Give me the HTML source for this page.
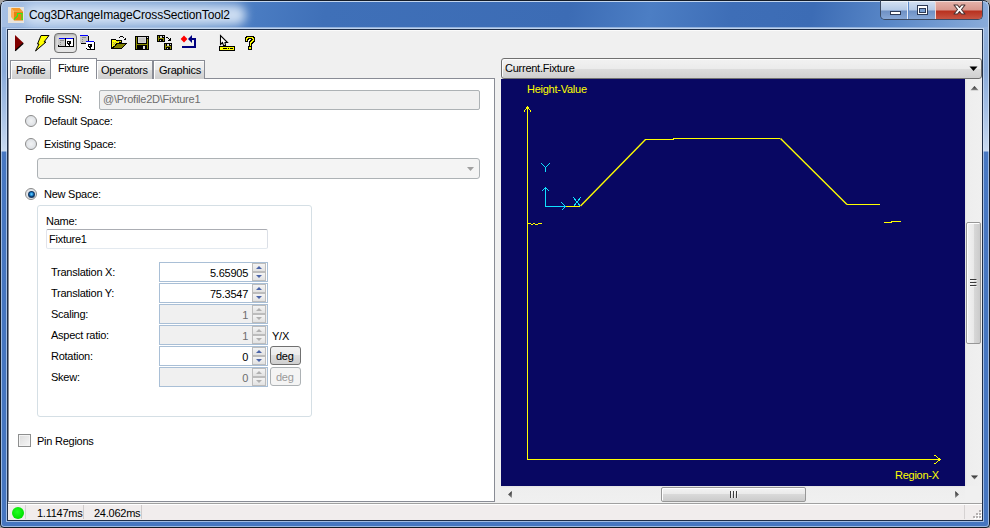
<!DOCTYPE html>
<html><head><meta charset="utf-8">
<style>
html,body{margin:0;padding:0;width:990px;height:528px;overflow:hidden;background:#a4a4a4;}
*{box-sizing:border-box;}
.a{position:absolute;}
.t{position:absolute;font-family:"Liberation Sans",sans-serif;font-size:11px;line-height:13px;white-space:pre;color:#000;letter-spacing:-0.25px;}
#frame{left:0;top:0;width:990px;height:528px;border:1px solid #141c28;border-radius:7px 7px 4px 4px;
 background:linear-gradient(180deg,#9ab6de 0px,#8eaeda 40px,#8aabd9 70px,#a6c0e4 110px,#c4d6ee 145px,#cadaf0 150px,#4878c2 151px,#4676c0 300px,#4676c0 528px);}
#titlebar{left:2px;top:2px;width:986px;height:25px;
 background:linear-gradient(100deg,#a6c0e4 0px,#9cb9e0 40px,#6a94cc 200px,#4a7cc2 250px,#3f70b8 320px,#3c6cb5 560px,#4c7ec4 640px,#3e6eb7 720px,#3c6cb5 800px,#5a88c8 880px,#8fb0dc 986px);}
#hl{left:1px;top:1px;width:988px;height:526px;border:1px solid rgba(230,240,252,0.55);border-radius:6px 6px 3px 3px;}
#halo{left:6px;top:28px;width:978px;height:494px;border:1px solid rgba(220,234,250,0.6);}
#client{left:7px;top:29px;width:976px;height:492px;border:1px solid #1e2e48;background:#f0f0f0;}

.tab{border:1px solid #898c95;border-bottom:none;background:linear-gradient(180deg,#f2f2f2 0,#ebebeb 50%,#dddddd 50%,#cfcfcf 100%);box-shadow:inset 1px 1px 0 #fff;}
.radio{width:12px;height:12px;border-radius:50%;border:1px solid #8a8a8a;background:radial-gradient(circle at 50% 50%,#f2f3f4 0,#dfe2e6 65%,#fafafa 78%,#fdfdfd 100%);}
.radio.on::after{content:"";position:absolute;left:1.5px;top:1.5px;width:7px;height:7px;border-radius:50%;background:radial-gradient(circle closest-side at 50% 45%,#7ad4ff 0,#2a98de 40%,#1268b0 62%,#0c3462 85%,#1c3c62 100%);}
.spin{width:14px;height:18px;}
.su{border:1px solid #bcbcbc;background:linear-gradient(180deg,#f4f4f4,#e2e2e2);}
</style></head><body>
<div id="frame" class="a"></div>
<div id="titlebar" class="a"></div>
<div id="hl" class="a"></div>
<div id="halo" class="a"></div>
<!-- title glow -->
<div class="a" style="left:24px;top:5px;width:222px;height:20px;border-radius:10px;background:rgba(214,228,245,0.92);filter:blur(5px);"></div>
<!-- title icon -->
<svg class="a" style="left:8px;top:7px" width="16" height="16" viewBox="0 0 16 16">
 <rect x="0" y="0" width="16" height="16" fill="#e8e4dc"/>
 <polygon points="3,1 11.6,1 15,4.5 6,4.5" fill="#f39a2a"/>
 <polygon points="3,1 6,4.5 6,13.5 3,10" fill="#ffb05a"/>
 <polygon points="6,4.5 15,4.5 15,13.5 6,13.5" fill="#e8820e"/>
 <polyline points="6,12.5 9.5,9 9.5,6.5 14,6.5 14,12.5 15,12.5" fill="none" stroke="#22f022" stroke-width="1.1"/>
</svg>
<div class="t" style="left:29px;top:8px;font-size:12px;line-height:14px;letter-spacing:-0.17px;color:#000">Cog3DRangeImageCrossSectionTool2</div>

<!-- caption buttons -->
<div class="a" style="left:880px;top:0px;width:103px;height:20px;border:1px solid #3b4a63;border-top-color:#1a2430;border-radius:0 0 5px 5px;overflow:hidden;">
  <div class="a" style="left:0;top:0;width:27px;height:19px;background:linear-gradient(180deg,#d4e1f2 0,#b4c9e6 48%,#6e90c4 52%,#8aaad8 100%);border-right:1px solid #e8eef8;box-shadow:inset 0 1px 0 rgba(255,255,255,0.6);"></div>
  <div class="a" style="left:28px;top:0;width:26px;height:19px;background:linear-gradient(180deg,#d4e1f2 0,#b4c9e6 48%,#6e90c4 52%,#8aaad8 100%);box-shadow:inset 0 1px 0 rgba(255,255,255,0.6);"></div>
  <div class="a" style="left:54px;top:0;width:48px;height:19px;border-left:1px solid #f0d8d4;background:linear-gradient(180deg,#e6b4ac 0,#d8968c 48%,#b8301e 52%,#c85a48 100%);box-shadow:inset 0 1px 0 rgba(255,255,255,0.5),inset -1px -1px 0 rgba(90,20,10,0.5);"></div>
  <div class="a" style="left:9px;top:10px;width:11px;height:4px;background:#fff;border:1px solid #2d3a55;"></div>
  <div class="a" style="left:36px;top:4px;width:11px;height:10px;border:1px solid #2d3a55;background:#fff;"><div class="a" style="left:1px;top:2px;width:7px;height:5px;border:1px solid #2d3a55;background:#7a9ed0"></div></div>
  <svg class="a" style="left:70px;top:0px" width="18" height="18" viewBox="0 0 18 18"><polygon points="3,4 6.5,4 8.5,6.5 10.5,4 14,4 10.5,8.5 14,13 10.5,13 8.5,10.5 6.5,13 3,13 6.5,8.5" fill="#fff" stroke="#4a3434" stroke-width="1.1" stroke-linejoin="round"/></svg>
</div>

<div id="client" class="a"></div>

<!-- toolbar area bg -->
<div class="a" style="left:8px;top:30px;width:974px;height:28px;background:#f0f0f0;border-top:1px solid #fbfbfb;"></div>
<!-- run triangle -->
<svg class="a" style="left:14px;top:34px" width="11" height="18" viewBox="0 0 11 18"><polygon points="1,1 9.5,9 1,17" fill="#800000"/><path d="M9.3,9.2 L1.2,16.8" stroke="#000" stroke-width="1.2"/></svg>
<!-- lightning -->
<svg class="a" style="left:34px;top:34px" width="16" height="18" viewBox="0 0 16 18">
 <polygon points="7,1.5 15,1.5 10,8 12,8 1.5,17 5,10 3.5,10" fill="#ffff00" stroke="#000" stroke-width="1" stroke-linejoin="miter"/>
</svg>
<!-- pressed button -->
<div class="a" style="left:54px;top:33px;width:23px;height:20px;border:1px solid #707070;border-radius:4px;background:linear-gradient(180deg,#d6d6d6,#e6e6e6);box-shadow:inset 1px 1px 2px rgba(0,0,0,0.2);"></div>
<svg class="a" style="left:58px;top:38px" width="16" height="9" viewBox="0 0 16 9" shape-rendering="crispEdges"><path d="M0,0h1v1h-1zM0,1h1v1h-1zM0,2h1v1h-1zM0,3h1v1h-1zM0,4h1v1h-1zM0,5h1v1h-1zM0,6h1v1h-1zM1,1h1v1h-1zM1,2h1v1h-1zM1,3h1v1h-1zM1,4h1v1h-1zM1,5h1v1h-1zM1,6h1v1h-1zM1,7h1v1h-1zM2,1h1v1h-1zM2,3h1v1h-1zM2,5h1v1h-1zM2,7h1v1h-1zM3,1h1v1h-1zM3,3h1v1h-1zM3,4h1v1h-1zM3,5h1v1h-1zM3,6h1v1h-1zM3,7h1v1h-1zM4,1h1v1h-1zM4,3h1v1h-1zM4,4h1v1h-1zM4,5h1v1h-1zM4,6h1v1h-1zM4,7h1v1h-1zM5,1h1v1h-1zM5,3h1v1h-1zM5,4h1v1h-1zM5,5h1v1h-1zM5,6h1v1h-1zM5,7h1v1h-1zM6,1h1v1h-1zM6,2h1v1h-1zM6,3h1v1h-1zM6,4h1v1h-1zM6,5h1v1h-1zM6,6h1v1h-1zM6,7h1v1h-1z" fill="#c8c8c8"/><path d="M1,0h1v1h-1zM2,0h1v1h-1zM3,0h1v1h-1zM4,0h1v1h-1zM5,0h1v1h-1zM6,0h1v1h-1zM8,0h1v1h-1zM9,0h1v1h-1zM10,0h1v1h-1zM11,0h1v1h-1zM12,0h1v1h-1zM13,0h1v1h-1zM14,0h1v1h-1z" fill="#0000ff"/><path d="M0,7h1v1h-1zM0,8h1v1h-1zM1,8h1v1h-1zM2,8h1v1h-1zM3,8h1v1h-1zM4,8h1v1h-1zM5,8h1v1h-1zM6,8h1v1h-1zM7,0h1v1h-1zM7,1h1v1h-1zM7,2h1v1h-1zM7,3h1v1h-1zM7,4h1v1h-1zM7,5h1v1h-1zM7,6h1v1h-1zM7,7h1v1h-1zM7,8h1v1h-1zM8,8h1v1h-1zM9,3h1v1h-1zM9,4h1v1h-1zM9,5h1v1h-1zM9,8h1v1h-1zM10,3h1v1h-1zM10,5h1v1h-1zM10,6h1v1h-1zM10,8h1v1h-1zM11,3h1v1h-1zM11,4h1v1h-1zM11,5h1v1h-1zM11,6h1v1h-1zM11,7h1v1h-1zM11,8h1v1h-1zM12,3h1v1h-1zM12,4h1v1h-1zM12,5h1v1h-1zM12,8h1v1h-1zM13,8h1v1h-1zM14,8h1v1h-1zM15,0h1v1h-1zM15,1h1v1h-1zM15,2h1v1h-1zM15,3h1v1h-1zM15,4h1v1h-1zM15,5h1v1h-1zM15,6h1v1h-1zM15,7h1v1h-1zM15,8h1v1h-1z" fill="#000"/><path d="M8,1h1v1h-1zM8,2h1v1h-1zM8,3h1v1h-1zM8,4h1v1h-1zM8,5h1v1h-1zM8,6h1v1h-1zM8,7h1v1h-1zM9,1h1v1h-1zM9,2h1v1h-1zM9,6h1v1h-1zM9,7h1v1h-1zM10,1h1v1h-1zM10,2h1v1h-1zM10,4h1v1h-1zM10,7h1v1h-1zM11,1h1v1h-1zM11,2h1v1h-1zM12,1h1v1h-1zM12,2h1v1h-1zM12,6h1v1h-1zM12,7h1v1h-1zM13,1h1v1h-1zM13,2h1v1h-1zM13,3h1v1h-1zM13,4h1v1h-1zM13,5h1v1h-1zM13,6h1v1h-1zM13,7h1v1h-1zM14,1h1v1h-1zM14,2h1v1h-1zM14,3h1v1h-1zM14,4h1v1h-1zM14,5h1v1h-1zM14,6h1v1h-1zM14,7h1v1h-1z" fill="#ffffff"/><path d="M2,2h1v1h-1zM2,4h1v1h-1zM2,6h1v1h-1zM3,2h1v1h-1zM4,2h1v1h-1zM5,2h1v1h-1z" fill="#8c8c8c"/></svg>
<!-- icon 4 -->
<svg class="a" style="left:80px;top:35px" width="15" height="15" viewBox="0 0 15 15" shape-rendering="crispEdges"><path d="M0,0h1v1h-1zM1,0h1v1h-1zM2,0h1v1h-1zM3,0h1v1h-1zM4,0h1v1h-1zM5,0h1v1h-1zM6,0h1v1h-1zM6,6h1v1h-1zM7,0h1v1h-1zM7,6h1v1h-1zM8,6h1v1h-1zM9,6h1v1h-1zM10,6h1v1h-1zM11,6h1v1h-1zM12,6h1v1h-1zM13,6h1v1h-1z" fill="#0000ff"/><path d="M0,1h1v1h-1zM0,2h1v1h-1zM0,3h1v1h-1zM0,4h1v1h-1zM0,5h1v1h-1zM0,6h1v1h-1zM0,7h1v1h-1zM1,1h1v1h-1zM1,2h1v1h-1zM1,3h1v1h-1zM1,4h1v1h-1zM1,5h1v1h-1zM1,6h1v1h-1zM1,7h1v1h-1zM2,1h1v1h-1zM2,3h1v1h-1zM2,5h1v1h-1zM2,7h1v1h-1zM3,1h1v1h-1zM3,3h1v1h-1zM3,4h1v1h-1zM3,5h1v1h-1zM3,6h1v1h-1zM3,7h1v1h-1zM4,1h1v1h-1zM4,3h1v1h-1zM4,4h1v1h-1zM4,5h1v1h-1zM4,6h1v1h-1zM4,7h1v1h-1zM5,1h1v1h-1zM5,3h1v1h-1zM5,4h1v1h-1zM5,5h1v1h-1zM5,6h1v1h-1zM5,7h1v1h-1zM6,1h1v1h-1zM6,2h1v1h-1zM6,3h1v1h-1zM6,4h1v1h-1zM6,5h1v1h-1zM7,1h1v1h-1zM7,2h1v1h-1zM7,3h1v1h-1zM7,4h1v1h-1zM7,5h1v1h-1z" fill="#c8c8c8"/><path d="M1,8h1v1h-1zM2,8h1v1h-1zM3,8h1v1h-1zM4,8h1v1h-1zM5,8h1v1h-1zM6,13h1v1h-1zM7,14h1v1h-1zM8,1h1v1h-1zM8,2h1v1h-1zM8,3h1v1h-1zM8,4h1v1h-1zM8,5h1v1h-1zM8,9h1v1h-1zM8,10h1v1h-1zM8,11h1v1h-1zM8,14h1v1h-1zM9,9h1v1h-1zM9,11h1v1h-1zM9,12h1v1h-1zM9,14h1v1h-1zM10,9h1v1h-1zM10,10h1v1h-1zM10,11h1v1h-1zM10,12h1v1h-1zM10,13h1v1h-1zM10,14h1v1h-1zM11,9h1v1h-1zM11,10h1v1h-1zM11,11h1v1h-1zM11,14h1v1h-1zM12,14h1v1h-1zM13,14h1v1h-1zM14,7h1v1h-1zM14,8h1v1h-1zM14,9h1v1h-1zM14,10h1v1h-1zM14,11h1v1h-1zM14,12h1v1h-1zM14,13h1v1h-1zM14,14h1v1h-1z" fill="#000"/><path d="M2,2h1v1h-1zM2,4h1v1h-1zM2,6h1v1h-1zM3,2h1v1h-1zM4,2h1v1h-1zM5,2h1v1h-1z" fill="#8c8c8c"/><path d="M6,7h1v1h-1zM6,8h1v1h-1zM6,9h1v1h-1zM6,10h1v1h-1zM6,11h1v1h-1zM6,12h1v1h-1zM7,7h1v1h-1zM7,8h1v1h-1zM7,9h1v1h-1zM7,10h1v1h-1zM7,11h1v1h-1zM7,12h1v1h-1zM7,13h1v1h-1zM8,7h1v1h-1zM8,8h1v1h-1zM8,12h1v1h-1zM8,13h1v1h-1zM9,7h1v1h-1zM9,8h1v1h-1zM9,10h1v1h-1zM9,13h1v1h-1zM10,7h1v1h-1zM10,8h1v1h-1zM11,7h1v1h-1zM11,8h1v1h-1zM11,12h1v1h-1zM11,13h1v1h-1zM12,7h1v1h-1zM12,8h1v1h-1zM12,9h1v1h-1zM12,10h1v1h-1zM12,11h1v1h-1zM12,12h1v1h-1zM12,13h1v1h-1zM13,7h1v1h-1zM13,8h1v1h-1zM13,9h1v1h-1zM13,10h1v1h-1zM13,11h1v1h-1zM13,12h1v1h-1zM13,13h1v1h-1z" fill="#ffffff"/></svg>
<!-- folder open -->
<svg class="a" style="left:110px;top:34px" width="18" height="16" viewBox="110 34 18 16" shape-rendering="crispEdges">
 <polygon points="111,39 115,39 116,40 122,40 122,43 127,43 122,49 111,49" fill="#000"/>
 <polygon points="112,40 115,40 116,41 121,41 121,42 116,43 112,47" fill="#ffff00"/>
 <path d="M113,42h1v1h-1zM115,42h1v1h-1zM114,43h1v1h-1zM113,44h1v1h-1zM114,45h1v1h-1zM117,41h1v1h-1zM119,41h1v1h-1z" fill="#a0a060"/>
 <polygon points="113,48 117,44 125,44 121,48" fill="#808000"/>
 <path d="M119,37h1v1h-1zM120,36h3v1h-3zM123,37h1v1h-1z" fill="#000"/>
 <polygon points="126,37 126,40 123,40" fill="#000"/>
</svg>
<!-- floppy -->
<svg class="a" style="left:135px;top:36px" width="14" height="14" viewBox="0 0 14 14" shape-rendering="crispEdges"><path d="M0,0h1v1h-1zM0,1h1v1h-1zM0,2h1v1h-1zM0,3h1v1h-1zM0,4h1v1h-1zM0,5h1v1h-1zM0,6h1v1h-1zM0,7h1v1h-1zM0,8h1v1h-1zM0,9h1v1h-1zM0,10h1v1h-1zM0,11h1v1h-1zM0,12h1v1h-1zM0,13h1v1h-1zM1,0h1v1h-1zM1,13h1v1h-1zM2,0h1v1h-1zM2,1h1v1h-1zM2,2h1v1h-1zM2,3h1v1h-1zM2,4h1v1h-1zM2,5h1v1h-1zM2,6h1v1h-1zM2,7h1v1h-1zM2,9h1v1h-1zM2,10h1v1h-1zM2,11h1v1h-1zM2,12h1v1h-1zM2,13h1v1h-1zM3,0h1v1h-1zM3,7h1v1h-1zM3,9h1v1h-1zM3,10h1v1h-1zM3,11h1v1h-1zM3,12h1v1h-1zM3,13h1v1h-1zM4,0h1v1h-1zM4,7h1v1h-1zM4,9h1v1h-1zM4,10h1v1h-1zM4,11h1v1h-1zM4,12h1v1h-1zM4,13h1v1h-1zM5,0h1v1h-1zM5,7h1v1h-1zM5,9h1v1h-1zM5,10h1v1h-1zM5,11h1v1h-1zM5,12h1v1h-1zM5,13h1v1h-1zM6,0h1v1h-1zM6,7h1v1h-1zM6,9h1v1h-1zM6,10h1v1h-1zM6,11h1v1h-1zM6,12h1v1h-1zM6,13h1v1h-1zM7,0h1v1h-1zM7,7h1v1h-1zM7,9h1v1h-1zM7,10h1v1h-1zM7,11h1v1h-1zM7,12h1v1h-1zM7,13h1v1h-1zM8,0h1v1h-1zM8,7h1v1h-1zM8,9h1v1h-1zM8,13h1v1h-1zM9,0h1v1h-1zM9,7h1v1h-1zM9,9h1v1h-1zM9,13h1v1h-1zM10,0h1v1h-1zM10,7h1v1h-1zM10,9h1v1h-1zM10,10h1v1h-1zM10,11h1v1h-1zM10,12h1v1h-1zM10,13h1v1h-1zM11,0h1v1h-1zM11,1h1v1h-1zM11,2h1v1h-1zM11,3h1v1h-1zM11,4h1v1h-1zM11,5h1v1h-1zM11,6h1v1h-1zM11,7h1v1h-1zM11,9h1v1h-1zM11,10h1v1h-1zM11,11h1v1h-1zM11,12h1v1h-1zM11,13h1v1h-1zM12,0h1v1h-1zM12,2h1v1h-1zM12,13h1v1h-1zM13,0h1v1h-1zM13,1h1v1h-1zM13,2h1v1h-1zM13,3h1v1h-1zM13,4h1v1h-1zM13,5h1v1h-1zM13,6h1v1h-1zM13,7h1v1h-1zM13,8h1v1h-1zM13,9h1v1h-1zM13,10h1v1h-1zM13,11h1v1h-1zM13,12h1v1h-1zM13,13h1v1h-1z" fill="#000"/><path d="M1,1h1v1h-1zM1,2h1v1h-1zM1,3h1v1h-1zM1,4h1v1h-1zM1,5h1v1h-1zM1,6h1v1h-1zM1,7h1v1h-1zM1,8h1v1h-1zM1,9h1v1h-1zM1,10h1v1h-1zM1,11h1v1h-1zM1,12h1v1h-1zM2,8h1v1h-1zM3,8h1v1h-1zM4,8h1v1h-1zM5,8h1v1h-1zM6,8h1v1h-1zM7,8h1v1h-1zM8,8h1v1h-1zM9,8h1v1h-1zM10,8h1v1h-1zM11,8h1v1h-1zM12,3h1v1h-1zM12,4h1v1h-1zM12,5h1v1h-1zM12,6h1v1h-1zM12,7h1v1h-1zM12,8h1v1h-1zM12,9h1v1h-1zM12,10h1v1h-1zM12,11h1v1h-1zM12,12h1v1h-1z" fill="#8c8c00"/><path d="M3,1h1v1h-1zM3,2h1v1h-1zM3,3h1v1h-1zM3,4h1v1h-1zM3,5h1v1h-1zM3,6h1v1h-1zM4,1h1v1h-1zM4,6h1v1h-1zM5,1h1v1h-1zM5,6h1v1h-1zM6,1h1v1h-1zM6,6h1v1h-1zM7,1h1v1h-1zM7,6h1v1h-1zM8,1h1v1h-1zM8,6h1v1h-1zM9,1h1v1h-1zM9,6h1v1h-1zM10,1h1v1h-1zM10,2h1v1h-1zM10,3h1v1h-1zM10,4h1v1h-1zM10,5h1v1h-1zM10,6h1v1h-1z" fill="#d6d6d6"/><path d="M8,10h1v1h-1zM8,11h1v1h-1zM8,12h1v1h-1zM9,10h1v1h-1zM9,11h1v1h-1zM9,12h1v1h-1zM12,1h1v1h-1z" fill="#e0e0e0"/><path d="M4,2h1v1h-1zM4,3h1v1h-1zM4,4h1v1h-1zM4,5h1v1h-1zM5,2h1v1h-1zM5,3h1v1h-1zM5,4h1v1h-1zM5,5h1v1h-1zM6,2h1v1h-1zM6,3h1v1h-1zM6,4h1v1h-1zM6,5h1v1h-1zM7,2h1v1h-1zM7,3h1v1h-1zM7,4h1v1h-1zM7,5h1v1h-1zM8,2h1v1h-1zM8,3h1v1h-1zM8,4h1v1h-1zM8,5h1v1h-1zM9,2h1v1h-1zM9,3h1v1h-1zM9,4h1v1h-1zM9,5h1v1h-1z" fill="#c4c4c4"/></svg>
<!-- multi floppy -->
<svg class="a" style="left:157px;top:35px" width="15" height="15" viewBox="0 0 15 15" shape-rendering="crispEdges"><path d="M0,0h1v1h-1zM0,1h1v1h-1zM0,2h1v1h-1zM0,3h1v1h-1zM0,4h1v1h-1zM0,5h1v1h-1zM0,6h1v1h-1zM1,0h1v1h-1zM1,6h1v1h-1zM2,0h1v1h-1zM2,1h1v1h-1zM2,2h1v1h-1zM2,4h1v1h-1zM2,5h1v1h-1zM2,6h1v1h-1zM3,0h1v1h-1zM3,4h1v1h-1zM3,6h1v1h-1zM4,0h1v1h-1zM4,4h1v1h-1zM4,5h1v1h-1zM4,6h1v1h-1zM5,0h1v1h-1zM5,1h1v1h-1zM5,2h1v1h-1zM5,4h1v1h-1zM5,5h1v1h-1zM5,6h1v1h-1zM6,0h1v1h-1zM6,2h1v1h-1zM6,6h1v1h-1zM7,0h1v1h-1zM7,1h1v1h-1zM7,2h1v1h-1zM7,3h1v1h-1zM7,4h1v1h-1zM7,5h1v1h-1zM7,6h1v1h-1zM7,8h1v1h-1zM7,9h1v1h-1zM7,10h1v1h-1zM7,11h1v1h-1zM7,12h1v1h-1zM7,13h1v1h-1zM7,14h1v1h-1zM8,8h1v1h-1zM8,14h1v1h-1zM9,2h1v1h-1zM9,8h1v1h-1zM9,9h1v1h-1zM9,10h1v1h-1zM9,12h1v1h-1zM9,13h1v1h-1zM9,14h1v1h-1zM10,2h1v1h-1zM10,8h1v1h-1zM10,12h1v1h-1zM10,14h1v1h-1zM11,3h1v1h-1zM11,5h1v1h-1zM11,8h1v1h-1zM11,12h1v1h-1zM11,13h1v1h-1zM11,14h1v1h-1zM12,4h1v1h-1zM12,5h1v1h-1zM12,8h1v1h-1zM12,9h1v1h-1zM12,10h1v1h-1zM12,12h1v1h-1zM12,13h1v1h-1zM12,14h1v1h-1zM13,3h1v1h-1zM13,4h1v1h-1zM13,5h1v1h-1zM13,8h1v1h-1zM13,10h1v1h-1zM13,14h1v1h-1zM14,8h1v1h-1zM14,9h1v1h-1zM14,10h1v1h-1zM14,11h1v1h-1zM14,12h1v1h-1zM14,13h1v1h-1zM14,14h1v1h-1z" fill="#000"/><path d="M1,1h1v1h-1zM1,2h1v1h-1zM1,3h1v1h-1zM1,4h1v1h-1zM1,5h1v1h-1zM2,3h1v1h-1zM3,3h1v1h-1zM4,3h1v1h-1zM5,3h1v1h-1zM6,3h1v1h-1zM6,4h1v1h-1zM6,5h1v1h-1zM8,9h1v1h-1zM8,10h1v1h-1zM8,11h1v1h-1zM8,12h1v1h-1zM8,13h1v1h-1zM9,11h1v1h-1zM10,11h1v1h-1zM11,11h1v1h-1zM12,11h1v1h-1zM13,11h1v1h-1zM13,12h1v1h-1zM13,13h1v1h-1z" fill="#8c8c00"/><path d="M3,1h1v1h-1zM3,2h1v1h-1zM3,5h1v1h-1zM4,1h1v1h-1zM4,2h1v1h-1zM6,1h1v1h-1zM10,9h1v1h-1zM10,10h1v1h-1zM10,13h1v1h-1zM11,9h1v1h-1zM11,10h1v1h-1zM13,9h1v1h-1z" fill="#d8d8d8"/></svg>
<!-- red dot arrow -->
<svg class="a" style="left:177px;top:32px" width="22" height="20" viewBox="177 32 22 20">
 <polygon points="184,35.6 187.4,39 184,42.4 180.6,39" fill="#ff0000"/>
 <polygon points="192,35 192,43 188,39" fill="#000080"/>
 <g shape-rendering="crispEdges" fill="#000080"><rect x="191" y="38" width="5" height="2"/><rect x="194" y="38" width="2" height="10"/><rect x="182" y="46" width="14" height="2"/></g>
</svg>
<!-- cursor ruler -->
<svg class="a" style="left:219px;top:34px" width="17" height="18" viewBox="0 0 17 18">
 <path d="M1.5,1.5 V10.5 L3.5,8.5 L4.5,11.5 H6.5 L6,8.5 H8.5 Z" fill="#fff" stroke="#000" stroke-width="1.1" stroke-linejoin="miter"/>
 <rect x="0.5" y="12.5" width="15" height="4" fill="#ffff00" stroke="#000" stroke-width="1" shape-rendering="crispEdges"/>
 <path d="M4,14.5 H8 M9,14.5 H10 M11,14.5 H14" stroke="#000" stroke-width="1" shape-rendering="crispEdges"/>
</svg>
<!-- question -->
<svg class="a" style="left:244px;top:35px" width="12" height="15" viewBox="0 0 12 15" shape-rendering="crispEdges"><path d="M1,2h1v1h-1zM1,3h1v1h-1zM1,4h1v1h-1zM1,5h1v1h-1zM1,6h1v1h-1zM2,1h1v1h-1zM2,2h1v1h-1zM2,3h1v1h-1zM2,4h1v1h-1zM2,5h1v1h-1zM2,6h1v1h-1zM3,1h1v1h-1zM3,2h1v1h-1zM3,3h1v1h-1zM3,4h1v1h-1zM3,5h1v1h-1zM3,6h1v1h-1zM4,1h1v1h-1zM4,2h1v1h-1zM4,3h1v1h-1zM4,4h1v1h-1zM4,11h1v1h-1zM4,12h1v1h-1zM4,13h1v1h-1zM4,14h1v1h-1zM5,1h1v1h-1zM5,2h1v1h-1zM5,3h1v1h-1zM5,6h1v1h-1zM5,7h1v1h-1zM5,8h1v1h-1zM5,9h1v1h-1zM5,10h1v1h-1zM5,11h1v1h-1zM5,12h1v1h-1zM5,13h1v1h-1zM5,14h1v1h-1zM6,1h1v1h-1zM6,2h1v1h-1zM6,3h1v1h-1zM6,5h1v1h-1zM6,6h1v1h-1zM6,7h1v1h-1zM6,8h1v1h-1zM6,9h1v1h-1zM6,10h1v1h-1zM6,11h1v1h-1zM6,12h1v1h-1zM6,13h1v1h-1zM6,14h1v1h-1zM7,1h1v1h-1zM7,2h1v1h-1zM7,3h1v1h-1zM7,4h1v1h-1zM7,5h1v1h-1zM7,6h1v1h-1zM7,7h1v1h-1zM7,8h1v1h-1zM7,9h1v1h-1zM7,10h1v1h-1zM7,11h1v1h-1zM7,12h1v1h-1zM7,13h1v1h-1zM7,14h1v1h-1zM8,1h1v1h-1zM8,2h1v1h-1zM8,3h1v1h-1zM8,4h1v1h-1zM8,5h1v1h-1zM8,6h1v1h-1zM8,7h1v1h-1zM8,8h1v1h-1zM9,1h1v1h-1zM9,2h1v1h-1zM9,3h1v1h-1zM9,4h1v1h-1zM9,5h1v1h-1zM9,6h1v1h-1zM9,7h1v1h-1zM10,2h1v1h-1zM10,3h1v1h-1zM10,4h1v1h-1zM10,5h1v1h-1zM10,6h1v1h-1z" fill="#000"/><path d="M2,3h1v1h-1zM2,4h1v1h-1zM2,5h1v1h-1zM3,2h1v1h-1zM3,3h1v1h-1zM4,2h1v1h-1zM5,2h1v1h-1zM5,12h1v1h-1zM5,13h1v1h-1zM6,2h1v1h-1zM6,7h1v1h-1zM6,8h1v1h-1zM6,9h1v1h-1zM6,10h1v1h-1zM6,12h1v1h-1zM6,13h1v1h-1zM7,2h1v1h-1zM7,6h1v1h-1zM7,7h1v1h-1zM8,2h1v1h-1zM8,3h1v1h-1zM8,5h1v1h-1zM8,6h1v1h-1zM9,3h1v1h-1zM9,4h1v1h-1zM9,5h1v1h-1z" fill="#ffff00"/></svg>

<!-- TAB CONTROL -->
<div class="a" style="left:8px;top:78px;width:487px;height:424px;border:1px solid #898c95;background:#fff;"></div>
<div class="a tab" style="left:10px;top:60px;width:41px;height:19px;"><div class="t" style="left:5px;top:3px">Profile</div></div>
<div class="a tab" style="left:96px;top:60px;width:57px;height:19px;"><div class="t" style="left:4px;top:3px">Operators</div></div>
<div class="a tab" style="left:153px;top:60px;width:52px;height:19px;"><div class="t" style="left:5px;top:3px">Graphics</div></div>
<div class="a" style="left:50px;top:58px;width:47px;height:21px;border:1px solid #898c95;border-bottom:none;background:#fff;"><div class="t" style="left:7px;top:3px;letter-spacing:-0.4px">Fixture</div></div>

<!-- Profile SSN -->
<div class="t" style="left:25px;top:93px">Profile SSN:</div>
<div class="a" style="left:99px;top:90px;width:381px;height:20px;border:1px solid #adb2b5;border-radius:2px;background:#f0f0f0;"></div>
<div class="t" style="left:103px;top:93px;color:#6d6d6d">@\Profile2D\Fixture1</div>

<!-- radios -->
<div class="a radio" style="left:25px;top:115px;"></div>
<div class="t" style="left:44px;top:115px">Default Space:</div>
<div class="a radio" style="left:25px;top:138px;"></div>
<div class="t" style="left:44px;top:138px">Existing Space:</div>
<div class="a" style="left:37px;top:158px;width:443px;height:21px;border:1px solid #adb2b5;border-radius:3px;background:#f4f4f4;"></div>
<svg class="a" style="left:466px;top:166px" width="9" height="6" viewBox="0 0 9 6"><polygon points="1,1 8,1 4.5,5" fill="#a0a0a0"/></svg>
<div class="a radio on" style="left:25px;top:188px;"></div>
<div class="t" style="left:44px;top:188px">New Space:</div>

<!-- group -->
<div class="a" style="left:37px;top:205px;width:275px;height:212px;border:1px solid #d5dfe5;border-radius:3px;"></div>
<div class="t" style="left:46px;top:215px">Name:</div>
<div class="a" style="left:46px;top:229px;width:222px;height:20px;border:1px solid #abadb3;border-top-color:#abadb3;border-left-color:#e2e3ea;border-right-color:#dbdfe6;border-bottom-color:#e3e9ef;border-radius:2px;background:#fff;"></div>
<div class="t" style="left:49px;top:233px">Fixture1</div>
<div class="t" style="left:51px;top:266px">Translation X:</div>
<div class="a" style="left:159px;top:262px;width:109px;height:20px;border:1px solid #a9bfd6;background:#fff;"></div>
<div class="t" style="right:742px;top:267px;color:#000">5.65905</div>
<div class="a spin" style="left:252px;top:263px;"><div class="a su" style="left:0;top:0;width:14px;height:9px;"></div><div class="a su" style="left:0;top:9px;width:14px;height:9px;"></div>
<svg class="a" style="left:0;top:0" width="14" height="18" viewBox="0 0 14 18"><polygon points="4,6 7,3 10,6" fill="#4b64a8"/><polygon points="4,12 10,12 7,15" fill="#4b64a8"/></svg></div>
<div class="t" style="left:51px;top:287px">Translation Y:</div>
<div class="a" style="left:159px;top:283px;width:109px;height:20px;border:1px solid #a9bfd6;background:#fff;"></div>
<div class="t" style="right:742px;top:288px;color:#000">75.3547</div>
<div class="a spin" style="left:252px;top:284px;"><div class="a su" style="left:0;top:0;width:14px;height:9px;"></div><div class="a su" style="left:0;top:9px;width:14px;height:9px;"></div>
<svg class="a" style="left:0;top:0" width="14" height="18" viewBox="0 0 14 18"><polygon points="4,6 7,3 10,6" fill="#4b64a8"/><polygon points="4,12 10,12 7,15" fill="#4b64a8"/></svg></div>
<div class="t" style="left:51px;top:308px">Scaling:</div>
<div class="a" style="left:159px;top:304px;width:109px;height:20px;border:1px solid #a9bfd6;background:#f0f0f0;"></div>
<div class="t" style="right:742px;top:309px;color:#6d6d6d">1</div>
<div class="a spin" style="left:252px;top:305px;"><div class="a su" style="left:0;top:0;width:14px;height:9px;"></div><div class="a su" style="left:0;top:9px;width:14px;height:9px;"></div>
<svg class="a" style="left:0;top:0" width="14" height="18" viewBox="0 0 14 18"><polygon points="4,6 7,3 10,6" fill="#b0b0b0"/><polygon points="4,12 10,12 7,15" fill="#b0b0b0"/></svg></div>
<div class="t" style="left:51px;top:329px">Aspect ratio:</div>
<div class="a" style="left:159px;top:325px;width:109px;height:20px;border:1px solid #a9bfd6;background:#f0f0f0;"></div>
<div class="t" style="right:742px;top:330px;color:#6d6d6d">1</div>
<div class="a spin" style="left:252px;top:326px;"><div class="a su" style="left:0;top:0;width:14px;height:9px;"></div><div class="a su" style="left:0;top:9px;width:14px;height:9px;"></div>
<svg class="a" style="left:0;top:0" width="14" height="18" viewBox="0 0 14 18"><polygon points="4,6 7,3 10,6" fill="#b0b0b0"/><polygon points="4,12 10,12 7,15" fill="#b0b0b0"/></svg></div>
<div class="t" style="left:272px;top:330px">Y/X</div>
<div class="t" style="left:51px;top:350px">Rotation:</div>
<div class="a" style="left:159px;top:346px;width:109px;height:20px;border:1px solid #a9bfd6;background:#fff;"></div>
<div class="t" style="right:742px;top:351px;color:#000">0</div>
<div class="a spin" style="left:252px;top:347px;"><div class="a su" style="left:0;top:0;width:14px;height:9px;"></div><div class="a su" style="left:0;top:9px;width:14px;height:9px;"></div>
<svg class="a" style="left:0;top:0" width="14" height="18" viewBox="0 0 14 18"><polygon points="4,6 7,3 10,6" fill="#4b64a8"/><polygon points="4,12 10,12 7,15" fill="#4b64a8"/></svg></div>
<div class="a" style="left:270px;top:346px;width:31px;height:19px;border:1px solid #707070;border-radius:3px;background:linear-gradient(180deg,#f2f2f2 0,#ebebeb 50%,#dddddd 50%,#cfcfcf 100%);"><div class="t" style="left:5px;top:3px">deg</div></div>
<div class="t" style="left:51px;top:371px">Skew:</div>
<div class="a" style="left:159px;top:367px;width:109px;height:20px;border:1px solid #a9bfd6;background:#f0f0f0;"></div>
<div class="t" style="right:742px;top:372px;color:#6d6d6d">0</div>
<div class="a spin" style="left:252px;top:368px;"><div class="a su" style="left:0;top:0;width:14px;height:9px;"></div><div class="a su" style="left:0;top:9px;width:14px;height:9px;"></div>
<svg class="a" style="left:0;top:0" width="14" height="18" viewBox="0 0 14 18"><polygon points="4,6 7,3 10,6" fill="#b0b0b0"/><polygon points="4,12 10,12 7,15" fill="#b0b0b0"/></svg></div>
<div class="a" style="left:270px;top:367px;width:31px;height:19px;border:1px solid #adb2b5;border-radius:3px;background:#f4f4f4;"><div class="t" style="left:5px;top:3px;color:#9a9a9a">deg</div></div>

<!-- Pin regions -->
<div class="a" style="left:18px;top:434px;width:13px;height:13px;border:1px solid #8e8f8f;background:linear-gradient(135deg,#dcdcdc,#f6f6f6);box-shadow:inset 0 0 0 1px #f4f4f4;"></div>
<div class="t" style="left:37px;top:435px">Pin Regions</div>

<!-- RIGHT PANEL -->
<div class="a" style="left:501px;top:58px;width:481px;height:21px;border:1px solid #707070;border-radius:3px;background:linear-gradient(180deg,#f2f2f2 0,#ebebeb 50%,#dddddd 50%,#cfcfcf 100%);box-shadow:inset 1px 1px 0 #fcfcfc;"></div>
<div class="t" style="left:505px;top:62px">Current.Fixture</div>
<svg class="a" style="left:969px;top:66px" width="9" height="6" viewBox="0 0 9 6"><polygon points="0.5,0.5 8.5,0.5 4.5,5" fill="#000"/></svg>
<!-- display -->
<div class="a" style="left:501px;top:79px;width:464px;height:407px;background:#080762;"></div>
<svg class="a" style="left:501px;top:79px" width="464" height="407" viewBox="501 79 464 407" shape-rendering="crispEdges">
 <g stroke="#ffff00" stroke-width="1" fill="none">
  <path d="M527.5,106 V459.5 H940"/>
  <path d="M523.5,112.5 L527.5,106.5 L531.5,112.5"/>
  <path d="M934.5,455 L940,459.5 L934.5,464"/>
  <path d="M565,206.5 H580"/><path d="M580.5,206 L645.5,139.5" shape-rendering="auto" stroke-width="1.35"/><path d="M645,139.5 H674 M673,138.5 H780"/><path d="M780.5,138.5 L847,204.5" shape-rendering="auto" stroke-width="1.35"/><path d="M847,204.5 H880"/>
  <path d="M884,222.5 H891.5 V221.5 H901"/>
  <path d="M528,223.5 H531 M531,224.5 H533 M533,223.5 H535 M535,224.5 H538 M538,223.5 H542"/>
 </g>
 <g stroke="#10e0ff" stroke-width="1" fill="none">
  <path d="M545.5,187 V206.5 H565"/>
  <path d="M541.5,191.5 L545.5,187.5 L549.5,191.5"/>
  <path d="M561.5,202.5 L565.5,206.5 L561.5,210.5"/>
  <path d="M541.5,163.5 L545.5,167.5 L549.5,163.5 M545.5,167.5 V172"/>
  <path d="M573.5,197.5 L580.5,206.5 M580.5,197.5 L573.5,206.5"/>
 </g>
</svg>
<div class="t" style="left:527px;top:83px;color:#ffff00">Height-Value</div>
<div class="t" style="left:895px;top:469px;color:#ffff00">Region-X</div>
<!-- vscroll -->
<div class="a" style="left:965px;top:79px;width:17px;height:407px;background:linear-gradient(90deg,#e3e3e3 0,#eeeeee 2px,#f0f0f0 100%);"></div>
<svg class="a" style="left:970px;top:85px" width="9" height="6" viewBox="0 0 9 6"><defs><linearGradient id="ga" x1="0" y1="0" x2="0" y2="1"><stop offset="0" stop-color="#2a2a2a"/><stop offset="1" stop-color="#8a8a8a"/></linearGradient></defs><polygon points="0.5,5.2 8.5,5.2 4.5,1" fill="url(#ga)"/></svg>
<svg class="a" style="left:970px;top:475px" width="9" height="6" viewBox="0 0 9 6"><polygon points="1,0.5 8,0.5 4.5,4.5" fill="url(#ga)"/></svg>
<div class="a" style="left:966px;top:222px;width:15px;height:122px;border:1px solid #979797;border-radius:2px;background:linear-gradient(90deg,#f3f3f3 0,#e9e9e9 50%,#d9d9d9 50%,#cbcbcb 100%);box-shadow:inset 1px 1px 0 #fff;"></div>
<svg class="a" style="left:970px;top:279px" width="7" height="8" viewBox="0 0 7 8"><path d="M0,1 H7 M0,4 H7 M0,7 H7" stroke="#fff" stroke-width="1"/><path d="M0,0.5 H6.5 M0,3.5 H6.5 M0,6.5 H6.5" stroke="#3a3a3a" stroke-width="1"/></svg>
<!-- hscroll -->
<div class="a" style="left:501px;top:486px;width:464px;height:16px;background:linear-gradient(180deg,#e3e3e3 0,#eeeeee 2px,#f0f0f0 100%);"></div>
<svg class="a" style="left:507px;top:490px" width="6" height="9" viewBox="0 0 6 9"><polygon points="4.8,1 4.8,8 1,4.5" fill="url(#ga)"/></svg>
<svg class="a" style="left:955px;top:490px" width="6" height="9" viewBox="0 0 6 9"><polygon points="0.2,1 0.2,8 4,4.5" fill="url(#ga)"/></svg>
<div class="a" style="left:661px;top:487px;width:145px;height:15px;border:1px solid #979797;border-radius:2px;background:linear-gradient(180deg,#f3f3f3 0,#e9e9e9 50%,#d9d9d9 50%,#cbcbcb 100%);box-shadow:inset 1px 1px 0 #fff;"></div>
<svg class="a" style="left:730px;top:491px" width="8" height="8" viewBox="0 0 8 8"><path d="M1,0 V7 M4,0 V7 M7,0 V7" stroke="#fff" stroke-width="1"/><path d="M0.5,0 V7 M3.5,0 V7 M6.5,0 V7" stroke="#3a3a3a" stroke-width="1"/></svg>
<div class="a" style="left:965px;top:486px;width:17px;height:16px;background:#f0f0f0;"></div>

<!-- STATUS BAR -->
<div class="a" style="left:8px;top:503px;width:974px;height:17px;border-top:1px solid #a0a0a0;background:#f1eded;box-shadow:inset 0 1px 0 #fff;"></div>
<div class="a" style="left:12px;top:507px;width:12px;height:12px;border-radius:50%;background:radial-gradient(circle at 45% 40%,#22ff22 0,#00e000 70%,#00b000 100%);"></div>
<div class="a" style="left:25px;top:505px;width:1px;height:14px;background:#d6d2d2"></div>
<div class="a" style="left:83px;top:505px;width:1px;height:14px;background:#cfcbcb"></div>
<div class="a" style="left:141px;top:505px;width:1px;height:14px;background:#cfcbcb"></div>
<div class="a" style="left:964px;top:505px;width:1px;height:14px;background:#d6d2d2"></div>
<div class="t" style="left:37px;top:507px">1.1147ms</div>
<div class="t" style="left:94px;top:507px">24.062ms</div>
<svg class="a" style="left:970px;top:508px" width="12" height="12" viewBox="0 0 12 12" shape-rendering="crispEdges"><g fill="#ffffff"><rect x="10" y="3" width="2" height="2"/><rect x="7" y="6" width="2" height="2"/><rect x="10" y="6" width="2" height="2"/><rect x="4" y="9" width="2" height="2"/><rect x="7" y="9" width="2" height="2"/><rect x="10" y="9" width="2" height="2"/></g><g fill="#b4b0b0"><rect x="9" y="2" width="2" height="2"/><rect x="6" y="5" width="2" height="2"/><rect x="9" y="5" width="2" height="2"/><rect x="3" y="8" width="2" height="2"/><rect x="6" y="8" width="2" height="2"/><rect x="9" y="8" width="2" height="2"/></g></svg>
</body></html>
